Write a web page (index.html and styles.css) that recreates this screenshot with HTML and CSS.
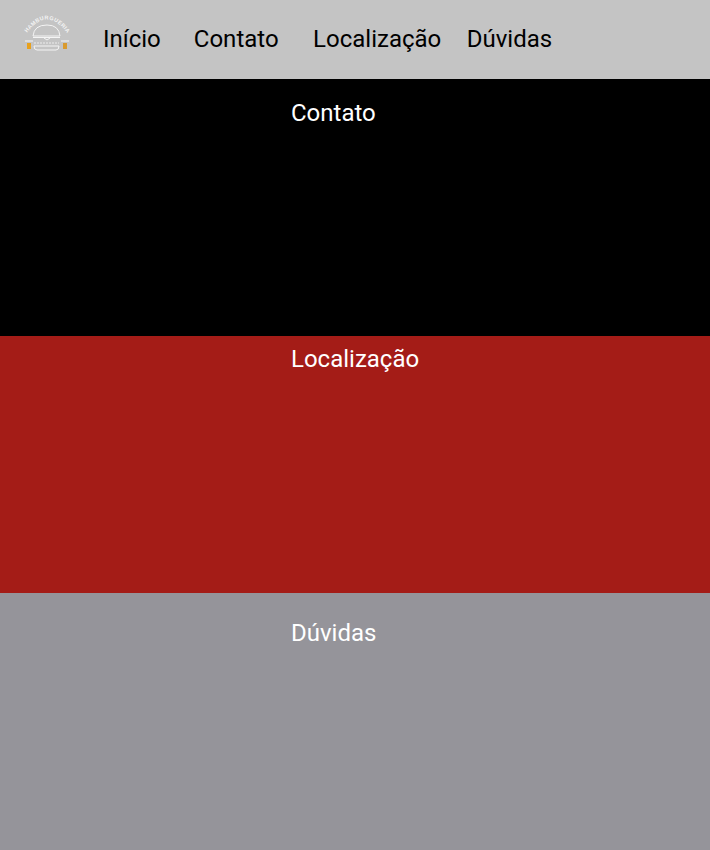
FILE: index.html
```html
<!DOCTYPE html>
<html lang="pt-BR">
<head>
    <meta charset="UTF-8">
    <meta name="viewport" content="width=device-width, initial-scale=1.0">
    <title>Burger</title>
    <link rel="stylesheet" href="styles.css">
</head>
<body>
    <header class="topbar">
        <a class="logo" href="#">
            <svg width="50" height="42" viewBox="0 0 50 42" fill="none">
                <defs>
                    <path id="logo-arc" d="M5 21 Q25 -6 45 21"></path>
                </defs>
                <text class="logo-text"><textPath href="#logo-arc">HAMBURGUERIA</textPath></text>
                <!-- bun -->
                <path d="M11 24 Q12 13 25 13 Q37 13 38 24 Z" stroke="#f4f4f4" stroke-width="1"></path>
                <path d="M22 26 L25 28 L28 26" stroke="#f4f4f4" stroke-width="1"></path>
                <path d="M11 25.5 H38" stroke="#f4f4f4" stroke-width="1"></path>
                <path d="M12 31 H37" stroke="#ececec" stroke-width="1.2" stroke-dasharray="2 1"></path>
                <path d="M12 34 Q12 38 15 38 H34 Q37 38 37 34 Z" stroke="#f4f4f4" stroke-width="1"></path>
                <!-- glasses -->
                <rect x="5" y="31" width="4" height="6" fill="#e9a11c"></rect>
                <rect x="41" y="31" width="4" height="6" fill="#d99a2e"></rect>
                <path d="M3 29 H11 M39 29 H47" stroke="#e4e4e4" stroke-width="1.5"></path>
            </svg>
        </a>
        <nav class="menu">
            <a class="menu-item menu-inicio" href="#">Início</a>
            <a class="menu-item menu-contato" href="#">Contato</a>
            <a class="menu-item menu-local" href="#">Localização</a>
            <a class="menu-item" href="#">Dúvidas</a>
        </nav>
    </header>

    <section class="block block-contato">
        <h2>Contato</h2>
    </section>
    <section class="block block-local">
        <h2>Localização</h2>
    </section>
    <section class="block block-duvidas">
        <h2>Dúvidas</h2>
    </section>
</body>
</html>
```

FILE: styles.css
```css
html, body {
    margin: 0;
    padding: 0;
}

body {
    font-family: Roboto, "Liberation Sans", sans-serif;
    font-size: 24px;
    color: #ffffff;
}

.topbar {
    display: flex;
    align-items: center;
    height: 79px;
    background: #c4c4c4;
}

.logo {
    display: block;
    width: 50px;
    height: 42px;
    margin-left: 22px;
    margin-top: -13px;
}

.logo-text {
    font-family: "Liberation Sans", sans-serif;
    font-size: 5.5px;
    font-weight: bold;
    letter-spacing: 0.4px;
    fill: #f4f4f4;
}

.menu {
    display: flex;
    margin-left: 31px;
    margin-top: -2px;
}

.menu-item {
    color: #000000;
    text-decoration: none;
    line-height: 28px;
}

.menu-inicio {
    margin-right: 33px;
}

.menu-contato {
    margin-right: 34.5px;
}

.menu-local {
    margin-right: 25.5px;
}

.block {
    padding-left: 291px;
}

.block h2 {
    margin: 0;
    font-size: 24px;
    font-weight: 400;
    line-height: 28px;
}

.block-contato {
    background: #000000;
    padding-top: 20px;
    height: 237px;
}

.block-local {
    background: #a41c17;
    padding-top: 9px;
    height: 248px;
}

.block-duvidas {
    background: #95949a;
    padding-top: 26px;
    height: 231px;
}
```
